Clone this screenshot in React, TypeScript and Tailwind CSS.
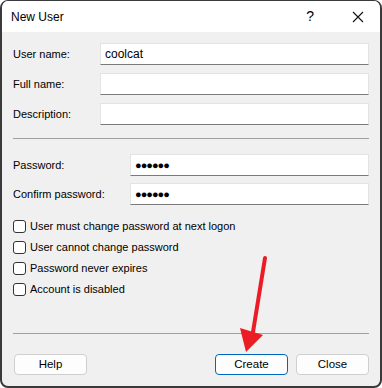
import React from "react";

const font = { fontFamily: '"Liberation Sans", Arial, sans-serif' };

function Field({ label, labelWidth, value, password }: { label: string; labelWidth: string; value?: string; password?: boolean }) {
  return (
    <div className="flex items-center h-[22px]">
      <div className={`${labelWidth} shrink-0 text-[11px] text-black`}>{label}</div>
      <div className="flex-1 h-[22px] bg-white border border-[#e3e3e3] border-b-[#7a7a7a] flex items-center px-[4px]">
        {password ? (
          <span className="text-[11px] font-bold tracking-[-1px] text-black leading-none">●●●●●●</span>
        ) : (
          <span className="text-[12px] text-black">{value}</span>
        )}
      </div>
    </div>
  );
}

function Check({ label }: { label: string }) {
  return (
    <div className="flex items-center h-[21px] gap-[4px]">
      <div className="w-[13px] h-[13px] rounded-[3px] border border-[#333333] bg-white" />
      <span className="text-[11px] text-black">{label}</span>
    </div>
  );
}

function Btn({ label, primary }: { label: string; primary?: boolean }) {
  return (
    <div
      className={
        "w-[73px] h-[21px] rounded-[4px] bg-[#fdfdfd] flex items-center justify-center text-[11.5px] text-black border " +
        (primary ? "border-[#0067c0]" : "border-[#cfcfcf]")
      }
    >
      {label}
    </div>
  );
}

export default function App() {
  return (
    <div className="w-[382px] h-[388px] bg-white relative" style={font}>
      <div className="w-full h-full rounded-[8px] border-x-2 border-b-2 border-t border-[#3a3a3a] overflow-hidden flex flex-col bg-[#f0f0f0]">
        {/* title bar */}
        <div className="h-[31px] bg-white flex items-center pl-[9px] shrink-0">
          <span className="text-[12px] text-black">New User</span>
          <span className="ml-auto text-[14px] text-black mr-[38px]">?</span>
          <svg width="12" height="12" viewBox="0 0 12 12" className="mr-[16px]">
            <path d="M1 1 L11 11 M11 1 L1 11" stroke="#111" strokeWidth="1.1" />
          </svg>
        </div>

        <div className="flex-1 flex flex-col px-[11px]">
          <div className="flex flex-col gap-[8px] mt-[11px]">
            <Field label="User name:" labelWidth="w-[87px]" value="coolcat" />
            <Field label="Full name:" labelWidth="w-[87px]" />
            <Field label="Description:" labelWidth="w-[87px]" />
          </div>

          <div className="h-px bg-[#a0a0a0] mt-[13px]" />

          <div className="flex flex-col gap-[7px] mt-[15px]">
            <Field label="Password:" labelWidth="w-[117px]" password />
            <Field label="Confirm password:" labelWidth="w-[117px]" password />
          </div>

          <div className="flex flex-col mt-[11px]">
            <Check label="User must change password at next logon" />
            <Check label="User cannot change password" />
            <Check label="Password never expires" />
            <Check label="Account is disabled" />
          </div>

          <div className="h-px bg-[#a0a0a0] mt-[33px]" />

          <div className="flex mt-[20px] pl-[1px]">
            <Btn label="Help" />
            <div className="ml-auto flex gap-[8px]">
              <Btn label="Create" primary />
              <Btn label="Close" />
            </div>
          </div>
        </div>
      </div>

      {/* annotation arrow */}
      <svg className="absolute left-0 top-0 pointer-events-none" width="382" height="388" viewBox="0 0 382 388">
        <line x1="265" y1="258" x2="253" y2="332" stroke="#ec1c24" strokeWidth="4" strokeLinecap="round" />
        <polygon points="240,328 263,335 246,352" fill="#ec1c24" />
      </svg>
    </div>
  );
}
